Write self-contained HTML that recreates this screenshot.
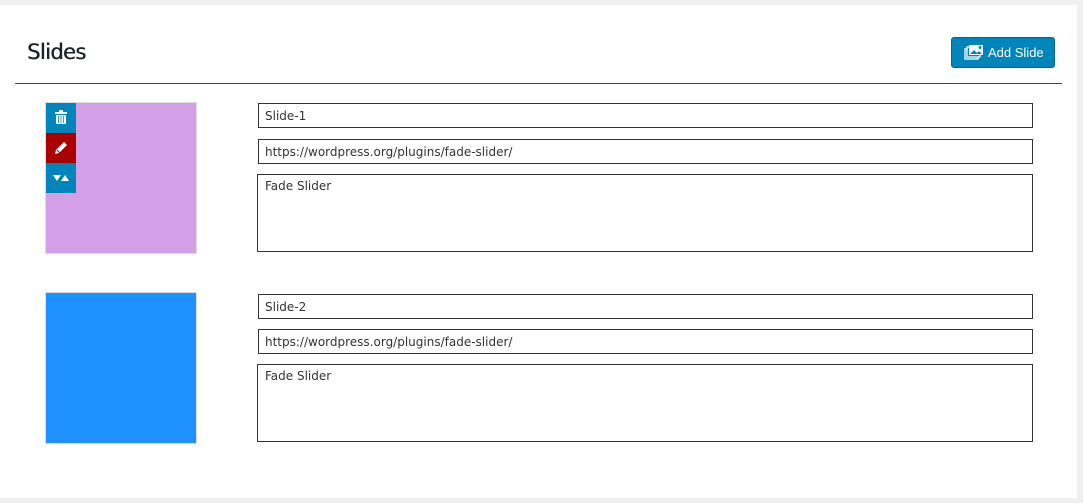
<!DOCTYPE html>
<html><head><style>
body{margin:0;width:1083px;height:503px;background:#f0f0f1;font-family:"Liberation Sans",sans-serif;position:relative;overflow:hidden}
.panel{position:absolute;left:0;top:5px;width:1077px;height:493px;background:#fff}
h1{position:absolute;left:27px;top:40px;margin:0;font-size:21px;font-weight:normal;color:#1d2327;font-family:"DejaVu Sans","Liberation Sans",sans-serif;letter-spacing:-0.6px;text-shadow:0.5px 0 0 #1d2327}
.line{position:absolute;left:15px;top:83px;width:1047px;height:1px;background:#1d4f6e}
.btn{position:absolute;left:951px;top:37px;width:104px;height:31px;background:#0085ba;border:1px solid #006799;box-sizing:border-box;border-radius:3px;color:#fff;font-size:13px;line-height:29px}
.btn span{position:absolute;left:36px;top:0}
.img{position:absolute;left:45px;width:150px;height:150px;border:1px solid #ddd}
.ib{position:absolute;left:46px;width:30px;height:30px}
.in{position:absolute;left:258px;width:775px;height:25px;border:1px solid #333;box-sizing:border-box;padding-left:6px;line-height:25px;color:#333;font-family:"DejaVu Sans",sans-serif;font-size:12px}
.ta{position:absolute;left:257px;width:776px;height:78px;border:1px solid #333;box-sizing:border-box;padding:4px 7px;color:#333;font-family:"DejaVu Sans",sans-serif;font-size:12px}
</style></head><body>
<div class="panel"></div>
<h1>Slides</h1>
<div class="btn"><svg style="position:absolute;left:12px;top:6px" width="20" height="17" viewBox="0 0 20 17"><rect x="1" y="5" width="13" height="10" fill="none" stroke="#fff" stroke-width="1.3"/><rect x="3" y="3" width="13" height="10" fill="#0085ba" stroke="#fff" stroke-width="1.3"/><rect x="5" y="1" width="14" height="10" fill="#fff"/><circle cx="16" cy="3.5" r="1.5" fill="#0085ba"/><path d="M6 10l4-4 3 3 2-2 3 3z" fill="#0085ba"/></svg><span>Add Slide</span></div>
<div class="line"></div>

<div class="img" style="top:102px;background:#d3a0e7"></div>
<div class="ib" style="top:103px;background:#0085ba"><svg width="30" height="30"><rect x="9" y="9" width="12" height="2" fill="#fff"/><rect x="13" y="7" width="4" height="2" fill="#fff"/><path d="M10 12h10v9h-10z" fill="#fff"/><path d="M12.5 13v7M15 13v7M17.5 13v7" stroke="#0085ba" stroke-width="0.8"/></svg></div>
<div class="ib" style="top:133px;background:#a00"><svg width="30" height="30"><path d="M9 21l1-4 8-8 3 3-8 8z" fill="#fff"/><path d="M11 17l3 3" stroke="#a00" stroke-width="1"/></svg></div>
<div class="ib" style="top:163px;background:#0085ba"><svg width="30" height="30"><path d="M7 12h8l-4 6z M15 18h8l-4-6z" fill="#fff"/></svg></div>
<div class="in" style="top:103px">Slide-1</div>
<div class="in" style="top:139px">https://wordpress.org/plugins/fade-slider/</div>
<div class="ta" style="top:174px">Fade Slider</div>

<div class="img" style="top:292px;background:#1e90ff"></div>
<div class="in" style="top:294px">Slide-2</div>
<div class="in" style="top:329px">https://wordpress.org/plugins/fade-slider/</div>
<div class="ta" style="top:364px">Fade Slider</div>
</body></html>
